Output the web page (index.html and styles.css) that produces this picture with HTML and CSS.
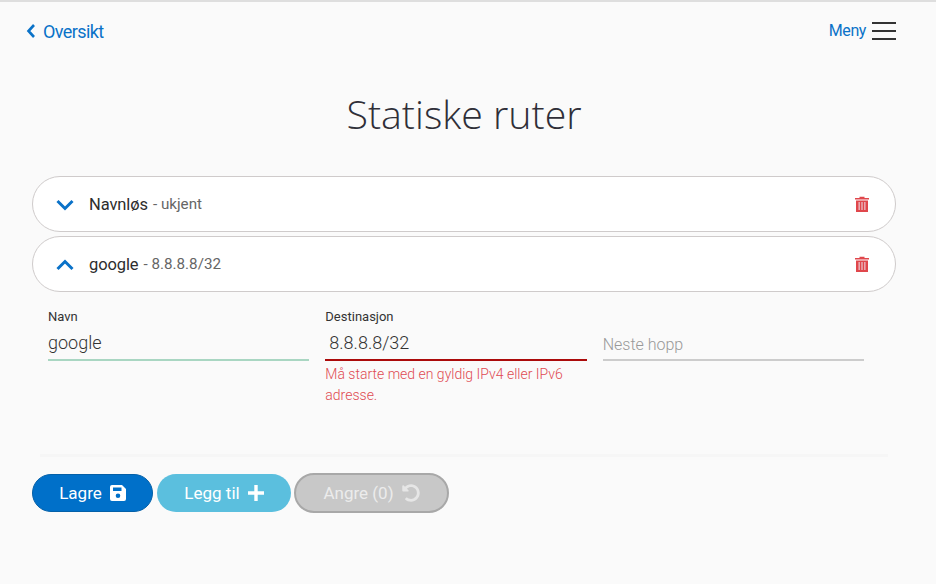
FILE: index.html
```html
<!DOCTYPE html>
<html lang="no">
<head>
<meta charset="utf-8">
<title>Statiske ruter</title>
<link rel="stylesheet" href="styles.css">
</head>
<body>
<header class="topbar">
  <a class="back" href="#">
    <svg class="back-icon" viewBox="0 0 10 16"><path d="M8 2 2.500 8 8 14" fill="none" stroke="currentColor" stroke-width="2.600"/></svg>
    <span>Oversikt</span>
  </a>
  <div class="menu">
    <span class="menu-text">Meny</span>
    <span class="burger"><i></i><i></i><i></i></span>
  </div>
</header>
<h1 class="title">Statiske ruter</h1>
<section class="routes">
  <div class="route">
    <svg class="chev" viewBox="0 0 18 12"><path d="M1.500 2 9 9.500 16.500 2" fill="none" stroke="currentColor" stroke-width="3"/></svg>
    <span class="route-name">Navnløs</span><span class="route-sub">- ukjent</span>
    <svg class="trash" viewBox="0 0 14 16"><path class="t" d="M0 2h4.500V.8h5V2H14v1.500H0zM1 4.500h12V16H1z"/><path class="s" d="M3.400 6h1.600v8H3.400zM6.200 6h1.600v8H6.200zM9 6h1.600v8H9z"/></svg>
  </div>
  <div class="route">
    <svg class="chev" viewBox="0 0 18 12"><path d="M1.500 10 9 2.500 16.500 10" fill="none" stroke="currentColor" stroke-width="3"/></svg>
    <span class="route-name">google</span><span class="route-sub">- 8.8.8.8/32</span>
    <svg class="trash" viewBox="0 0 14 16"><path class="t" d="M0 2h4.500V.8h5V2H14v1.500H0zM1 4.500h12V16H1z"/><path class="s" d="M3.400 6h1.600v8H3.400zM6.200 6h1.600v8H6.200zM9 6h1.600v8H9z"/></svg>
  </div>
</section>
<section class="fields">
  <div class="field">
    <label class="label">Navn</label>
    <div class="input ok">google</div>
  </div>
  <div class="field">
    <label class="label">Destinasjon</label>
    <div class="input bad">8.8.8.8/32</div>
    <p class="error">Må starte med en gyldig IPv4 eller IPv6 adresse.</p>
  </div>
  <div class="field">
    <label class="label">&nbsp;</label>
    <div class="input empty">Neste hopp</div>
  </div>
</section>
<hr class="rule">
<footer class="actions">
  <button class="btn save">Lagre
    <svg viewBox="0 0 16 16"><path d="M2 0h10l4 4v10a2 2 0 0 1-2 2H2a2 2 0 0 1-2-2V2a2 2 0 0 1 2-2zm1 2.500v3.500h8.500V2.500zM8 8.500a2.300 2.300 0 1 0 0 4.600 2.300 2.300 0 0 0 0-4.600z" fill="#fff" fill-rule="evenodd"/></svg>
  </button>
  <button class="btn add">Legg til
    <svg viewBox="0 0 16 16"><path d="M6.300 0h3.400v6.300H16v3.400H9.700V16H6.300V9.700H0V6.300h6.300z" fill="#fff"/></svg>
  </button>
  <button class="btn undo">Angre (0)
    <svg viewBox="0 0 512 512"><path d="M255.545 8c-66.269.119-126.438 26.233-170.860 68.685L48.971 40.971C33.851 25.851 8 36.559 8 57.941V192c0 13.255 10.745 24 24 24h134.059c21.382 0 32.090-25.851 16.971-40.971l-41.750-41.750c30.864-28.899 70.801-44.907 113.230-45.273 92.398-.798 170.283 73.977 169.484 169.442C423.236 348.009 349.816 424 256 424c-41.127 0-79.997-14.678-110.630-41.556-4.743-4.161-11.906-3.908-16.368.553L89.340 422.659c-4.872 4.872-4.631 12.815.482 17.433C133.798 479.813 192.074 504 256 504c136.966 0 247.999-111.033 248-247.998C504.001 119.193 392.354 7.755 255.545 8z" fill="#e6e6e6"/></svg>
  </button>
</footer>
</body>
</html>
```
FILE: styles.css
```css
* { box-sizing: border-box; }
html, body { height: 100%; }
body {
  margin: 0;
  background: #fafafa;
  border-top: 2px solid #dedede;
  font-family: Roboto, "Liberation Sans", sans-serif;
  color: #333;
  overflow: hidden;
}
.topbar {
  display: flex;
  justify-content: space-between;
  align-items: center;
  height: 58px;
  padding: 0 40px 0 26px;
}
.back, .menu {
  display: flex;
  align-items: center;
  color: #0a72c8;
  text-decoration: none;
}
.back { font-size: 18px; letter-spacing: -0.6px; }
.back-icon { width: 10px; height: 16px; margin-right: 7px; }
.menu { font-size: 16px; gap: 6px; letter-spacing: -0.4px; }
.menu-text { padding-bottom: 2px; }
.burger { display: flex; flex-direction: column; gap: 6px; width: 24px; }
.burger i { display: block; height: 2px; background: #333; }
.title {
  margin: 29px 8px 0 0;
  text-align: center;
  font-family: "Open Sans", sans-serif;
  font-weight: 300;
  font-size: 39.300px;
  line-height: 50px;
  color: #2f2f38;
}
.routes {
  display: flex;
  flex-direction: column;
  gap: 4px;
  margin: 37px 40px 0 32px;
}
.route {
  display: flex;
  align-items: center;
  height: 56px;
  padding: 0 26px 0 23px;
  background: #fff;
  border: 1px solid #cfcbcb;
  border-radius: 28px;
}
.chev { width: 18px; height: 12px; margin-top: 2px; color: #0a72c8; margin-right: 15px; }
.route-name { font-size: 16.500px; color: #2d2d2d; letter-spacing: -0.1px; }
.route-sub { font-size: 15.200px; color: #666; margin-left: 5px; }
.trash { width: 14px; height: 16px; margin-left: auto; }
.trash .t { fill: #e0474c; }
.trash .s { fill: #e8a9b0; }
.fields {
  display: flex;
  gap: 16px;
  min-height: 146px;
  margin: 16px 72px 0 48px;
}
.field { flex: 1 1 0; min-width: 0; }
.label { display: block; font-size: 13px; line-height: 18px; color: #333; }
.input {
  height: 35px;
  font-size: 18px;
  font-weight: 300;
  line-height: 34px;
  color: #333;
  border-bottom: 2px solid #ccc;
}
.input.ok { border-bottom-color: #a9d6c2; }
.input.bad { border-bottom-color: #ab0b0b; padding-left: 4px; }
.input.empty { font-size: 16px; color: #999; line-height: 37px; }
.error {
  margin: 3px 0 0;
  font-size: 14px;
  font-weight: 300;
  line-height: 21px;
  color: #df4a52;
}
.rule {
  height: 3px;
  margin: 0 48px 0 40px;
  border: 0;
  background: #f6f6f6;
}
.actions {
  display: flex;
  align-items: center;
  gap: 4px;
  margin: 16px 0 0 32px;
}
.btn {
  display: flex;
  align-items: center;
  justify-content: center;
  gap: 8px;
  height: 38px;
  padding: 0;
  border: 1px solid transparent;
  border-radius: 19px;
  font-family: Roboto, "Liberation Sans", sans-serif;
  font-size: 17px;
  color: #fff;
}
.btn svg { width: 16px; height: 16px; }
.save { width: 121px; background: #0070c9; border-color: #0460a8; }
.add { width: 134px; background: #5bbfde; }
.undo {
  width: 155px;
  height: 40px;
  border: 2px solid #a8a8a8;
  border-radius: 20px;
  background: #c8c8c8;
  color: #ececec;
  margin-left: -1px;
}
.undo svg { width: 18px; height: 18px; }
```
